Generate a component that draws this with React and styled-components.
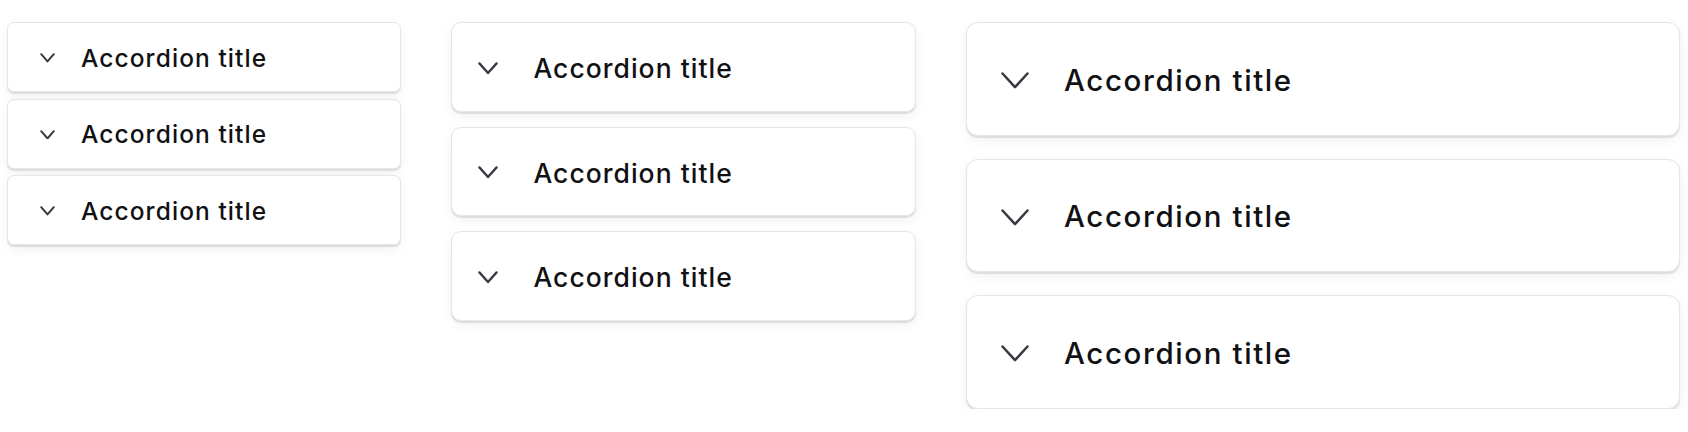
import React from "react";
import styled, { createGlobalStyle } from "styled-components";

const GlobalStyle = createGlobalStyle`
  * { box-sizing: border-box; }
  html, body { margin: 0; padding: 0; background: #ffffff; }
  body {
    font-family: Inter, "Noto Sans", "Liberation Sans", sans-serif;
    -webkit-font-smoothing: antialiased;
  }
`;

const SIZES = {
  sm: { width: 394, height: 70, gap: 6.5, radius: 7, pad: 33, iconW: 15, stroke: 2, iconGap: 26, font: 24.5, ls: 1.08, shift: 2 },
  md: { width: 465, height: 89.5, gap: 15, radius: 10, pad: 26.5, iconW: 20, stroke: 2.3, iconGap: 36, font: 26.5, ls: 1.02, shift: 3 },
  lg: { width: 714, height: 113.5, gap: 23, radius: 12, pad: 35, iconW: 28, stroke: 2.5, iconGap: 35, font: 29.5, ls: 1.6, shift: 3.5 },
};

const Page = styled.div`
  display: flex;
  flex-direction: row;
  align-items: flex-start;
  gap: 50px;
  padding: 22px 0 0 7px;
`;

const Column = styled.div`
  display: flex;
  flex-direction: column;
  width: ${(p) => p.$s.width}px;
  gap: ${(p) => p.$s.gap}px;
`;

const Item = styled.div`
  height: ${(p) => p.$s.height}px;
  background: #ffffff;
  border: 1px solid #e6e6e9;
  border-radius: ${(p) => p.$s.radius}px;
  box-shadow: 0 1.5px 1px rgba(24, 24, 27, 0.11), 0 4px 12px rgba(24, 24, 27, 0.06);
  display: flex;
`;

const Trigger = styled.button`
  all: unset;
  flex: 1;
  display: flex;
  align-items: center;
  gap: ${(p) => p.$s.iconGap}px;
  padding-left: ${(p) => p.$s.pad - 1}px;
  padding-top: ${(p) => p.$s.shift}px;
  cursor: pointer;
`;

const Title = styled.span`
  font-family: Inter, "Noto Sans", "Liberation Sans", sans-serif;
  font-size: ${(p) => p.$s.font}px;
  font-weight: 550;
  color: #111113;
  letter-spacing: ${(p) => p.$s.ls}px;
  line-height: 1;
`;

const Icon = styled.svg`
  display: block;
  flex: none;
  color: #38383f;
`;

function Chevron({ w, sw }) {
  const a = sw * 0.6;
  const h = w / 2 + a * 2;
  return (
    <Icon width={w} height={h} viewBox={`0 0 ${w} ${h}`} fill="none" aria-hidden="true">
      <path
        d={`M${a} ${a} L${w / 2} ${w / 2 + a - a * 0.2} L${w - a} ${a}`}
        stroke="currentColor"
        strokeWidth={sw}
        strokeLinecap="round"
        strokeLinejoin="round"
      />
    </Icon>
  );
}

function Accordion({ size }) {
  const s = SIZES[size];
  return (
    <Column $s={s}>
      {[0, 1, 2].map((i) => (
        <Item key={i} $s={s}>
          <Trigger $s={s} type="button">
            <Chevron w={s.iconW} sw={s.stroke} />
            <Title $s={s}>Accordion title</Title>
          </Trigger>
        </Item>
      ))}
    </Column>
  );
}

export default function App() {
  return (
    <>
      <GlobalStyle />
      <Page>
        <Accordion size="sm" />
        <Accordion size="md" />
        <Accordion size="lg" />
      </Page>
    </>
  );
}
